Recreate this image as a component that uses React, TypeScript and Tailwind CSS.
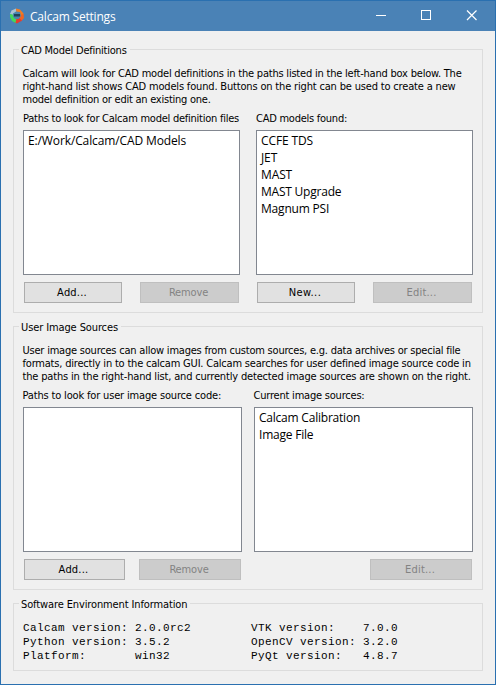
import type { ReactNode } from "react";

type Line = { text: string; tracking?: string };

function GroupBox({ title, tracking, className, children }: { title: string; tracking: string; className: string; children: ReactNode }) {
  return (
    <section className={`flex flex-col border border-[#dcdcdc] pl-[9px] pr-[9px] ${className}`}>
      <h2 className={`-mt-[6px] -ml-[4px] h-[13px] self-start bg-[#f0f0f0] pr-[3px] pl-[2px] whitespace-pre ${tracking}`}>{title}</h2>
      {children}
    </section>
  );
}

function Paragraph({ lines }: { lines: Line[] }) {
  return (
    <div className="mt-[10px] -ml-[0.5px] whitespace-pre">
      {lines.map((l) => (
        <p key={l.text} className={l.tracking}>{l.text}</p>
      ))}
    </div>
  );
}

function ListBox({ items, className = "" }: { items: Line[]; className?: string }) {
  return (
    <ul className={`h-[145px] border border-[#828790] bg-white pt-px pl-1 font-['Open_Sans',sans-serif] text-xs leading-[17px] whitespace-pre ${className}`}>
      {items.map((i) => (
        <li key={i.text} className={i.tracking}>{i.text}</li>
      ))}
    </ul>
  );
}

function Button({ label, disabled, className }: { label: string; disabled?: boolean; className: string }) {
  const tone = disabled ? "border-[#bfbfbf] bg-[#cccccc] text-[#838383]" : "border-[#adadad] bg-[#e1e1e1] text-black";
  return (
    <button disabled={disabled} className={`flex h-[21px] items-center justify-center border pr-[2px] pb-px leading-[13px] ${tone} ${className}`}>
      {label}
    </button>
  );
}

function AppIcon() {
  return (
    <svg width="16" height="16" viewBox="0 0 16 16">
      <path d="M8 8 1 6 2.500 2.500 7 .5z" fill="#a9c3d3" />
      <path d="M8 8 7 .5 11 1.500 14.500 5.500 14 8z" fill="#f47b20" />
      <path d="M8 8 14.500 6 15 10 12 13.500z" fill="#ee6524" />
      <path d="M8 8 13 12.500 8 15.500 5.500 14.500z" fill="#e53b30" />
      <path d="M8 8 6.500 15 3 13 1 9 1 6z" fill="#43d85b" />
      <path d="M4 5.500 7 3.500 11 4 12 8 9.500 11 6 11 4 8.500z" fill="#4a86ad" />
      <path d="M5 6h6v2.500H5z" fill="#1f4357" />
    </svg>
  );
}

function TitleBar() {
  return (
    <header className="flex h-[30px] items-center bg-[#4a82b6] pl-2 text-white">
      <AppIcon />
      <h1 className="ml-[5px] grow font-['Open_Sans',sans-serif] text-xs leading-[17px] tracking-[-0.2px]">Calcam Settings</h1>
      <svg width="120" height="30" viewBox="0 0 120 30" fill="none" stroke="#fff" shapeRendering="crispEdges">
        <path d="M1 14.500h10" />
        <path d="M46.500 9.500h9v9h-9z" />
        <path d="M92 9.500l9.500 9.500M101.500 9.500l-9.500 9.500" strokeWidth="1.200" shapeRendering="auto" />
      </svg>
    </header>
  );
}

function Version({ name, value }: { name: string; value: string }) {
  return (
    <div className="flex">
      <dt className="w-[112px]">{name}</dt>
      <dd>{value}</dd>
    </div>
  );
}

export default function App() {
  return (
    <div className="flex h-[685px] w-[496px] flex-col border border-[#2a70b0] bg-[#f0f0f0] font-['DejaVu_Sans_Condensed','DejaVu_Sans',sans-serif] text-[11px] leading-[13px] text-black">
      <TitleBar />
      <main className="flex flex-col px-3 pt-[18px]">
        <GroupBox title="CAD Model Definitions" tracking="tracking-[-0.23px]" className="h-[264px]">
          <Paragraph
            lines={[
              { text: "Calcam will look for CAD model definitions in the paths listed in the left-hand box below. The", tracking: "tracking-[-0.21px]" },
              { text: "right-hand list shows CAD models found. Buttons on the right can be used to create a new", tracking: "tracking-[-0.17px]" },
              { text: "model definition or edit an existing one.", tracking: "tracking-[-0.245px]" },
            ]}
          />
          <div className="mt-[6px] flex gap-4 whitespace-pre">
            <div className="w-[217px]">
              <h3 className="mb-[5px] tracking-[-0.245px]">Paths to look for Calcam model definition files</h3>
              <ListBox items={[{ text: "E:/Work/Calcam/CAD Models", tracking: "tracking-[-0.12px]" }]} />
              <div className="mt-[7px] flex justify-between px-px">
                <Button label="Add..." className="w-[98px] tracking-[0.2px]" />
                <Button label="Remove" disabled className="w-[99px] tracking-[-0.15px]" />
              </div>
            </div>
            <div className="w-[217px]">
              <h3 className="mb-[5px] tracking-[-0.25px]">CAD models found:</h3>
              <ListBox
                items={[
                  { text: "CCFE TDS", tracking: "tracking-[-0.12px]" },
                  { text: "JET", tracking: "tracking-[-0.12px]" },
                  { text: "MAST", tracking: "tracking-[-0.12px]" },
                  { text: "MAST Upgrade", tracking: "tracking-[-0.22px]" },
                  { text: "Magnum PSI", tracking: "tracking-[-0.2px]" },
                ]}
              />
              <div className="mt-[7px] flex justify-between px-px">
                <Button label="New..." className="w-[98px] tracking-[0.4px]" />
                <Button label="Edit..." disabled className="w-[99px] tracking-[0.2px]" />
              </div>
            </div>
          </div>
        </GroupBox>

        <GroupBox title="User Image Sources" tracking="tracking-[-0.11px]" className="mt-[13px] h-[264px]">
          <Paragraph
            lines={[
              { text: "User image sources can allow images from custom sources, e.g. data archives or special file", tracking: "tracking-[-0.215px]" },
              { text: "formats, directly in to the calcam GUI. Calcam searches for user defined image source code in", tracking: "tracking-[-0.2px]" },
              { text: "the paths in the right-hand list, and currently detected image sources are shown on the right.", tracking: "tracking-[-0.17px]" },
            ]}
          />
          <div className="mt-[6px] flex gap-3 whitespace-pre">
            <div className="w-[219px]">
              <h3 className="-ml-[0.5px] mb-[5px] tracking-[-0.165px]">Paths to look for user image source code:</h3>
              <ListBox items={[]} />
              <div className="mt-[7px] flex justify-between px-px">
                <Button label="Add..." className="w-[101px] tracking-[0.2px]" />
                <Button label="Remove" disabled className="w-[102px] tracking-[-0.15px]" />
              </div>
            </div>
            <div className="w-[219px]">
              <h3 className="-ml-[0.5px] mb-[5px] tracking-[-0.21px]">Current image sources:</h3>
              <ListBox
                items={[
                  { text: "Calcam Calibration", tracking: "tracking-[-0.22px]" },
                  { text: "Image File", tracking: "tracking-[-0.22px]" },
                ]}
              />
              <div className="mt-[7px] flex justify-end px-px">
                <Button label="Edit..." disabled className="w-[102px] tracking-[0.2px]" />
              </div>
            </div>
          </div>
        </GroupBox>

        <GroupBox title="Software Environment Information" tracking="tracking-[-0.12px]" className="mt-[13px] h-[68px]">
          <div className="mt-[10px] flex font-['Liberation_Mono',monospace] text-[11px] leading-[14px] tracking-[0.4px] whitespace-pre">
            <dl className="w-[228px]">
              <Version name="Calcam version:" value="2.0.0rc2" />
              <Version name="Python version:" value="3.5.2" />
              <Version name="Platform:" value="win32" />
            </dl>
            <dl>
              <Version name="VTK version:" value="7.0.0" />
              <Version name="OpenCV version:" value="3.2.0" />
              <Version name="PyQt version:" value="4.8.7" />
            </dl>
          </div>
        </GroupBox>
      </main>
    </div>
  );
}
